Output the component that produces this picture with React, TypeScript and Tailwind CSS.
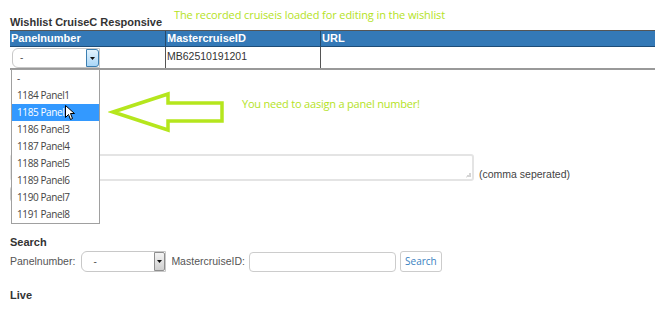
import React from 'react';

const panels = ['-', '1184 Panel1', '1185 Panel2', '1186 Panel3', '1187 Panel4', '1188 Panel5', '1189 Panel6', '1190 Panel7', '1191 Panel8'];

// kleine pijl-knop van de select
const SelectButton: React.FC<{ active?: boolean }> = ({ active }) => (
  <div
    className={
      active
        ? 'w-[13px] h-full flex items-center justify-center border border-[#3c7fb1] rounded-r-[3px] bg-gradient-to-b from-[#e3f3fd] to-[#a9d6f7]'
        : 'w-[11px] h-full flex items-center justify-center border border-[#8e8e8e] rounded-r-[2px] bg-gradient-to-b from-[#f4f4f4] to-[#cfcfcf]'
    }
  >
    <svg width="5" height="3" viewBox="0 0 5 3">
      <path d="M0 0H5L2.5 3Z" fill="#111" />
    </svg>
  </div>
);

const App: React.FC = () => {
  return (
    <div className="relative w-[660px] h-[332px] bg-white overflow-hidden text-[#333] font-['Liberation_Sans',Arial,sans-serif]">
      <div className="pl-[10px] pt-[15px]">
        <h2 className="text-[11px] leading-[14px] font-bold text-[#333]">Wishlist CruiseC Responsive</h2>

        {/* tabel */}
        <div className="mt-[1px] w-[645px]">
          <div className="flex h-[17px] border-t border-t-[#555] border-b border-b-[#1e4d78] bg-[#3479b7] text-white text-[11px] font-bold leading-[15px]">
            <div className="w-[155px] pl-[1px]">Panelnumber</div>
            <div className="w-[155px] pl-[1px] border-l border-l-[#274a6b]">MastercruiseID</div>
            <div className="flex-1 pl-[1px] border-l border-l-[#274a6b]">URL</div>
          </div>
          <div className="flex h-[23px] border-b-2 border-b-[#999]">
            <div className="w-[155px] pl-[2px] pt-[1px]">
              <div className="flex w-[88px] h-[20px] border border-[#c8c8c8] rounded-l-[6px] bg-white">
                <div className="flex-1 pl-[7px] text-[10px] leading-[18px] text-[#555]">-</div>
                <SelectButton active />
              </div>
            </div>
            <div className="w-[155px] pl-[1px] border-l border-l-[#555] text-[10.5px] leading-[16px] pt-[1px]">MB62510191201</div>
            <div className="flex-1 border-l border-l-[#555]" />
          </div>
        </div>

        {/* panelnummers invoer */}
        <div className="mt-[84px] flex items-end gap-[5px]">
          <div className="relative w-[464px] h-[27px] border-2 border-[#e4e4e4] rounded-[3px]">
            <svg className="absolute right-[1px] bottom-[1px]" width="6" height="6" viewBox="0 0 6 6">
              <path d="M5 1V5M3 3V5M1 5H1.5" stroke="#aaa" strokeWidth="1" />
            </svg>
          </div>
          <span className="text-[10.5px] leading-[14px] text-[#444]">(comma seperated)</span>
        </div>
        <button className="mt-[5px] block w-[60px] h-[16px] border border-[#ccc] rounded-[3px] bg-white" />

        {/* zoeken */}
        <h3 className="mt-[33px] text-[11px] leading-[14px] font-bold text-[#333]">Search</h3>
        <div className="mt-[2px] flex items-center h-[21px] text-[10.5px] text-[#555]">
          <span>Panelnumber:</span>
          <div className="ml-[6px] flex w-[85px] h-[21px] border border-[#c8c8c8] rounded-l-[6px] bg-white">
            <div className="flex-1 pl-[11px] text-[10px] leading-[19px]">-</div>
            <SelectButton />
          </div>
          <span className="ml-[5px]">MastercruiseID:</span>
          <div className="ml-[4px] w-[147px] h-[20px] border border-[#ccc] rounded-[4px]" />
          <button className="ml-[4px] w-[42px] h-[21px] border border-[#ccc] rounded-[3px] bg-white text-[#3a7fc1] text-[10px] font-['Open_Sans',sans-serif]">
            Search
          </button>
        </div>

        <h3 className="mt-[16px] text-[11px] leading-[14px] font-bold text-[#333]">Live</h3>
      </div>

      {/* uitgeklapte lijst */}
      <ul className="absolute left-[11px] top-[69px] w-[89px] border border-[#a0a0a0] bg-white font-['Open_Sans',sans-serif] text-[10px] tracking-[-0.4px] text-[#444]">
        {panels.map((p, i) => (
          <li
            key={i}
            className={i === 2 ? 'h-[17px] leading-[17px] pl-[5px] bg-[#3399ff] text-white' : 'h-[17px] leading-[17px] pl-[5px]'}
          >
            {p}
          </li>
        ))}
      </ul>

      {/* muiscursor */}
      <svg className="absolute left-[65px] top-[105px]" width="11" height="16" viewBox="0 0 11 16">
        <path d="M0.5 0.5V12.5L3.5 9.5L5.5 14.5L7.5 13.5L5.5 8.5H9.5Z" fill="#fff" stroke="#000" strokeWidth="1" strokeLinejoin="round" />
      </svg>

      {/* annotaties */}
      <div className="absolute left-[174px] top-[7px] font-['Open_Sans',sans-serif] text-[11px] leading-[15px] tracking-[-0.1px] text-[#b4e21e]">
        The recorded cruiseis loaded for editing in the wishlist
      </div>
      <svg className="absolute left-[108px] top-[88px]" width="120" height="48" viewBox="108 88 120 48">
        <path d="M113 112L168 94V103H222V121H168V130Z" fill="none" stroke="#b5e61d" strokeWidth="3.5" strokeLinejoin="miter" />
      </svg>
      <div className="absolute left-[242px] top-[96px] font-['Open_Sans',sans-serif] text-[11px] leading-[15px] tracking-[-0.2px] text-[#b4e21e]">
        You need to aasign a panel number!
      </div>
    </div>
  );
};

export default App;
